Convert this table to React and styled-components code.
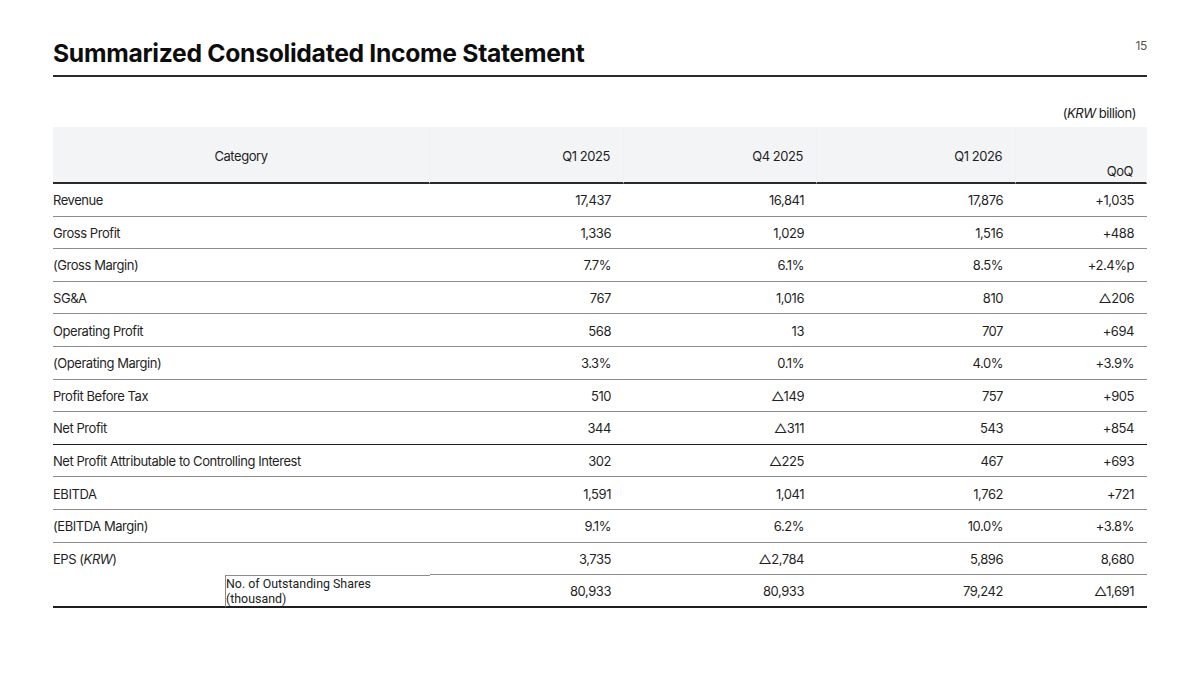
import React from "react";
import styled, { createGlobalStyle } from "styled-components";

const Global = createGlobalStyle`
  html, body { margin: 0; padding: 0; background: #fff; }
  body { font-family: Inter, "Noto Sans", sans-serif; color: #1a1a1a; }
`;

const Page = styled.div`
  width: 1200px;
  height: 675px;
  box-sizing: border-box;
  padding: 36px 53px 0 53px;
  display: flex;
  flex-direction: column;
`;

const TitleBar = styled.div`
  display: flex;
  justify-content: space-between;
  align-items: flex-start;
  border-bottom: 2px solid #2a2a2a;
  height: 41px;
  box-sizing: border-box;
`;

const Title = styled.h1`
  margin: 0;
  font-size: 24.7px;
  font-weight: 700;
  letter-spacing: -0.3px;
  line-height: 34px;
  color: #0d0d0d;
`;

const PageNo = styled.span`
  font-size: 12px;
  color: #555;
  line-height: 20px;
  letter-spacing: -0.3px;
`;

const Unit = styled.div`
  text-align: right;
  font-size: 13px;
  letter-spacing: -0.45px;
  line-height: 18px;
  padding-right: 11px;
  margin-top: 27px;
  height: 23px;
  color: #1a1a1a;
  em { font-style: italic; }
`;

const Table = styled.table`
  width: 1094px;
  table-layout: fixed;
  border-collapse: separate;
  border-spacing: 0;
  font-size: 13px;
  letter-spacing: -0.45px;
  color: #1f1f1f;
`;

const HeadCell = styled.th`
  background: #f3f4f5;
  font-weight: 400;
  height: 57px;
  padding: 2px 13px 0 0;
  box-sizing: border-box;
  border-bottom: 2px solid #2a2a2a;
  border-right: 1px solid ${(p) => (p.$last ? "#f3f4f5" : "#f0f1f2")};
  text-align: ${(p) => p.$align || "right"};
  vertical-align: ${(p) => p.$valign || "middle"};
  padding-bottom: ${(p) => (p.$valign === "bottom" ? "3px" : "0")};
  padding-left: ${(p) => (p.$align === "center" ? "13px" : "0")};
`;

const Cell = styled.td`
  height: 32.6px;
  box-sizing: border-box;
  padding: 1px 13px 0 0;
  text-align: ${(p) => p.$align || "right"};
  vertical-align: middle;
  white-space: nowrap;
  border-bottom: ${(p) =>
    p.$line === "none"
      ? "1px solid transparent"
      : p.$line === "dark"
      ? "1px solid #1e1e1e"
      : p.$line === "thick"
      ? "2px solid #1e1e1e"
      : "1px solid #8c8c8c"};
  em { font-style: italic; }
`;

const SubCell = styled(Cell)`
  border-left: 1px solid #8c8c8c;
  border-top: 1px solid #8c8c8c;
  padding: 0;
  white-space: normal;
  line-height: 15px;
  font-family: Roboto, "Liberation Sans", sans-serif;
  font-size: 12.4px;
  letter-spacing: 0;
  color: #222;
`;

const rows = [
  ["Revenue", "17,437", "16,841", "17,876", "+1,035"],
  ["Gross Profit", "1,336", "1,029", "1,516", "+488"],
  ["(Gross Margin)", "7.7%", "6.1%", "8.5%", "+2.4%p"],
  ["SG&A", "767", "1,016", "810", "△206"],
  ["Operating Profit", "568", "13", "707", "+694"],
  ["(Operating Margin)", "3.3%", "0.1%", "4.0%", "+3.9%"],
  ["Profit Before Tax", "510", "△149", "757", "+905"],
  ["Net Profit", "344", "△311", "543", "+854", "dark"],
  ["Net Profit Attributable to Controlling Interest", "302", "△225", "467", "+693"],
  ["EBITDA", "1,591", "1,041", "1,762", "+721"],
  ["(EBITDA Margin)", "9.1%", "6.2%", "10.0%", "+3.8%"],
];

export default function App() {
  return (
    <>
      <Global />
      <Page>
        <TitleBar>
          <Title>Summarized Consolidated Income Statement</Title>
          <PageNo>15</PageNo>
        </TitleBar>
        <Unit>
          (<em>KRW</em> billion)
        </Unit>
        <Table>
          <colgroup>
            <col style={{ width: 172 }} />
            <col style={{ width: 205 }} />
            <col style={{ width: 194 }} />
            <col style={{ width: 193 }} />
            <col style={{ width: 199 }} />
            <col style={{ width: 131 }} />
          </colgroup>
          <thead>
            <tr>
              <HeadCell colSpan={2} $align="center">Category</HeadCell>
              <HeadCell>Q1 2025</HeadCell>
              <HeadCell>Q4 2025</HeadCell>
              <HeadCell>Q1 2026</HeadCell>
              <HeadCell $valign="bottom" $last>QoQ</HeadCell>
            </tr>
          </thead>
          <tbody>
            {rows.map((r) => (
              <tr key={r[0]}>
                <Cell colSpan={2} $align="left" $line={r[5]}>{r[0]}</Cell>
                <Cell $line={r[5]}>{r[1]}</Cell>
                <Cell $line={r[5]}>{r[2]}</Cell>
                <Cell $line={r[5]}>{r[3]}</Cell>
                <Cell $line={r[5]}>{r[4]}</Cell>
              </tr>
            ))}
            <tr>
              <Cell colSpan={2} $align="left" $line="none">
                EPS (<em>KRW</em>)
              </Cell>
              <Cell>3,735</Cell>
              <Cell>△2,784</Cell>
              <Cell>5,896</Cell>
              <Cell>8,680</Cell>
            </tr>
            <tr>
              <Cell $line="thick" />
              <SubCell $align="left" $line="thick">
                No. of Outstanding Shares (thousand)
              </SubCell>
              <Cell $line="thick">80,933</Cell>
              <Cell $line="thick">80,933</Cell>
              <Cell $line="thick">79,242</Cell>
              <Cell $line="thick">△1,691</Cell>
            </tr>
          </tbody>
        </Table>
      </Page>
    </>
  );
}
